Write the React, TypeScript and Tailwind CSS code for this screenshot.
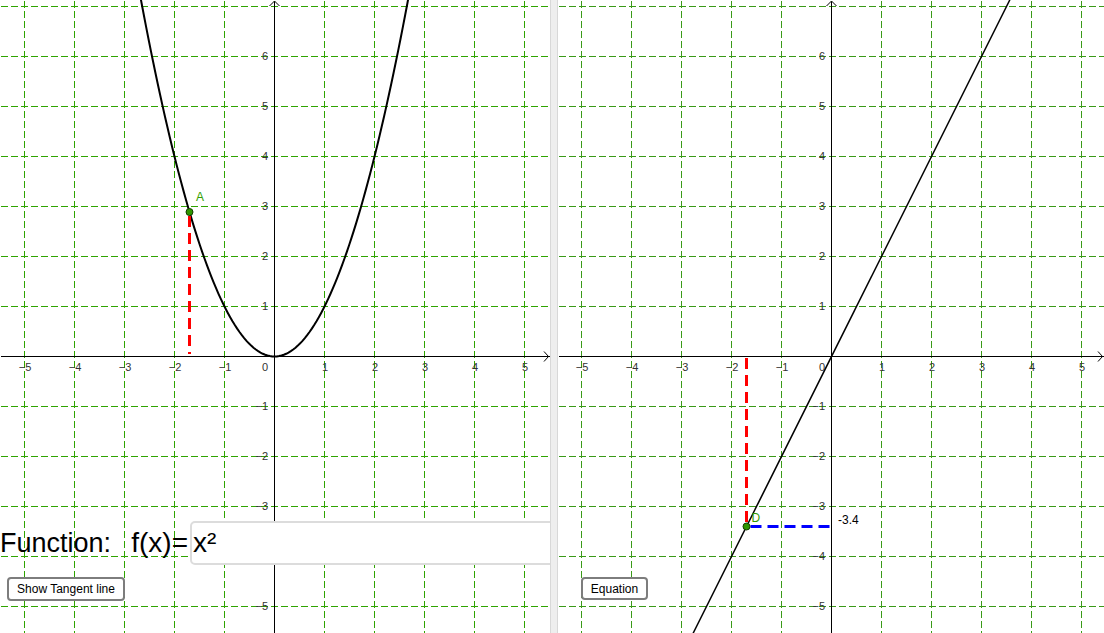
import type { FC, ReactNode } from 'react';

const H = 633;
const U = 50; // pixels per unit

type AxesProps = {
  w: number;
  ox: number;
  oy: number;
  gridColor: string;
};

const minus = (k: number) => (k < 0 ? `\u2212${-k}` : `${k}`);

const Axes: FC<AxesProps> = ({ w, ox, oy, gridColor }) => {
  const cols: number[] = [];
  const rows: number[] = [];
  for (let k = -12; k <= 12; k++) {
    const x = ox + k * U;
    if (x > 0 && x < w) cols.push(k);
    const y = oy - k * U;
    if (y > 0 && y < H) rows.push(k);
  }

  return (
    <g>
      {/* grid, half-pixel offset keeps 1px lines crisp */}
      <g transform="translate(0.5 0.5)" shapeRendering="crispEdges">
        {cols.map(k => (
          <line
            key={`gx${k}`}
            x1={ox + k * U}
            y1={0}
            x2={ox + k * U}
            y2={H}
            stroke={gridColor}
            strokeWidth={1}
            strokeDasharray="7 3"
          />
        ))}
        {rows.map(k => (
          <line
            key={`gy${k}`}
            x1={0}
            y1={oy - k * U}
            x2={w}
            y2={oy - k * U}
            stroke={gridColor}
            strokeWidth={1}
            strokeDasharray="7 3"
          />
        ))}
        <line x1={0} y1={oy} x2={w - 1} y2={oy} stroke="#000" strokeWidth={1} />
        <line x1={ox} y1={1} x2={ox} y2={H} stroke="#000" strokeWidth={1} />
      </g>

      <polyline
        points={`${w - 6},${oy - 4.5} ${w - 1.5},${oy + 0.5} ${w - 6},${oy + 5.5}`}
        fill="none"
        stroke="#000"
        strokeWidth={1}
      />
      <polyline
        points={`${ox - 4.5},6 ${ox + 0.5},1 ${ox + 5.5},6`}
        fill="none"
        stroke="#000"
        strokeWidth={1}
      />

      {/* tick labels */}
      {cols
        .filter(k => k !== 0 && k >= -5 && k <= 5)
        .map(k => (
          <text
            key={`lx${k}`}
            x={ox + k * U + 1}
            y={oy + 15}
            fontSize={11}
            fill="#333"
            textAnchor="middle"
          >
            {minus(k)}
          </text>
        ))}
      {rows
        .filter(k => k !== 0 && k >= -5 && k <= 6)
        .map(k => (
          <text
            key={`ly${k}`}
            x={ox - 6}
            y={oy - k * U + 4}
            fontSize={11}
            fill="#333"
            textAnchor="end"
          >
            {minus(k)}
          </text>
        ))}
      <text x={ox - 6} y={oy + 15} fontSize={11} fill="#333" textAnchor="end">
        0
      </text>
    </g>
  );
};

const Panel: FC<{ width: number; children: ReactNode; overlay?: ReactNode }> = ({
  width,
  children,
  overlay
}) => (
  <div className="relative h-full shrink-0 overflow-hidden bg-white" style={{ width }}>
    <svg className="absolute inset-0" width={width} height={H} viewBox={`0 0 ${width} ${H}`}>
      {children}
    </svg>
    {overlay}
  </div>
);

const GgbButton: FC<{ label: string; className: string }> = ({ label, className }) => (
  <button
    type="button"
    className={`absolute flex items-center justify-center rounded-[4px] border-2 border-[#7d7d7d] bg-white text-[12px] leading-none text-black ${className}`}
  >
    {label}
  </button>
);

export default function App() {
  // left: f(x) = x^2
  const lox = 274;
  const loy = 356;
  const parabola: string[] = [];
  for (let i = 0; i <= 120; i++) {
    const x = -2.8 + (5.6 * i) / 120;
    parabola.push(`${(lox + 0.5 + x * U).toFixed(2)},${(loy + 0.5 - x * x * U).toFixed(2)}`);
  }
  const ax = -1.7;
  const Ax = lox + 0.5 + ax * U;
  const Ay = loy + 0.5 - ax * ax * U;

  // right: f'(x) = 2x
  const rW = 546;
  const rox = 273;
  const roy = 356;
  const Dx = rox + 0.5 + ax * U;
  const Dy = roy + 0.5 - 2 * ax * U;

  return (
    <div className="flex h-[633px] w-[1104px] overflow-hidden bg-white font-['Liberation_Sans',Arial,sans-serif]">
      <Panel
        width={550}
        overlay={
          <>
            <div className="absolute left-0 top-[521px] flex h-[44px] items-center text-black">
              <span className="w-[130px] text-[27px] leading-none">Function:</span>
              <span className="w-[58px] text-right text-[28px] leading-none">f(x)=</span>
              <div className="ml-[2px] flex h-[44px] w-[380px] items-center rounded-[5px] border-2 border-[#dcdcdc] bg-white pl-[1px] text-[28px] leading-none">
                x²
              </div>
            </div>
            <GgbButton label="Show Tangent line" className="left-[7px] top-[577px] h-[24px] w-[118px]" />
          </>
        }
      >
        <Axes w={550} ox={lox} oy={loy} gridColor="#2fa400" />
        <polyline points={parabola.join(' ')} fill="none" stroke="#000" strokeWidth={2} />
        <line
          x1={Ax}
          y1={Ay + 4}
          x2={Ax}
          y2={loy - 2}
          stroke="#ff0000"
          strokeWidth={3}
          strokeDasharray="11 6"
        />
        <circle cx={Ax} cy={Ay} r={3.5} fill="#2f9600" stroke="#143d00" strokeWidth={1} />
        <text x={196} y={201} fontSize={12} fill="#33a000">
          A
        </text>
      </Panel>

      <div className="h-full w-2 shrink-0 border-x border-[#d8d8d8] bg-[#eeeeee]" />

      <Panel
        width={rW}
        overlay={<GgbButton label="Equation" className="left-[23px] top-[577px] h-[23px] w-[67px]" />}
      >
        <Axes w={rW} ox={rox} oy={roy} gridColor="#3a9a18" />
        <line
          x1={rox + 0.5 - 3 * U}
          y1={roy + 0.5 + 6 * U}
          x2={rox + 0.5 + 4 * U}
          y2={roy + 0.5 - 8 * U}
          stroke="#000"
          strokeWidth={1.5}
        />
        <line
          x1={Dx}
          y1={roy + 2}
          x2={Dx}
          y2={Dy - 4}
          stroke="#ff0000"
          strokeWidth={3}
          strokeDasharray="11 6"
        />
        <line
          x1={Dx + 4}
          y1={Dy}
          x2={rox}
          y2={Dy}
          stroke="#0000ff"
          strokeWidth={3}
          strokeDasharray="11 6"
        />
        <circle cx={Dx} cy={Dy} r={3.5} fill="#2f9600" stroke="#143d00" strokeWidth={1} />
        <text x={Dx + 5} y={Dy - 5} fontSize={12} fill="#339900">
          D
        </text>
        <text x={rox + 7} y={Dy - 3} fontSize={12} fill="#000">
          -3.4
        </text>
      </Panel>
    </div>
  );
}
